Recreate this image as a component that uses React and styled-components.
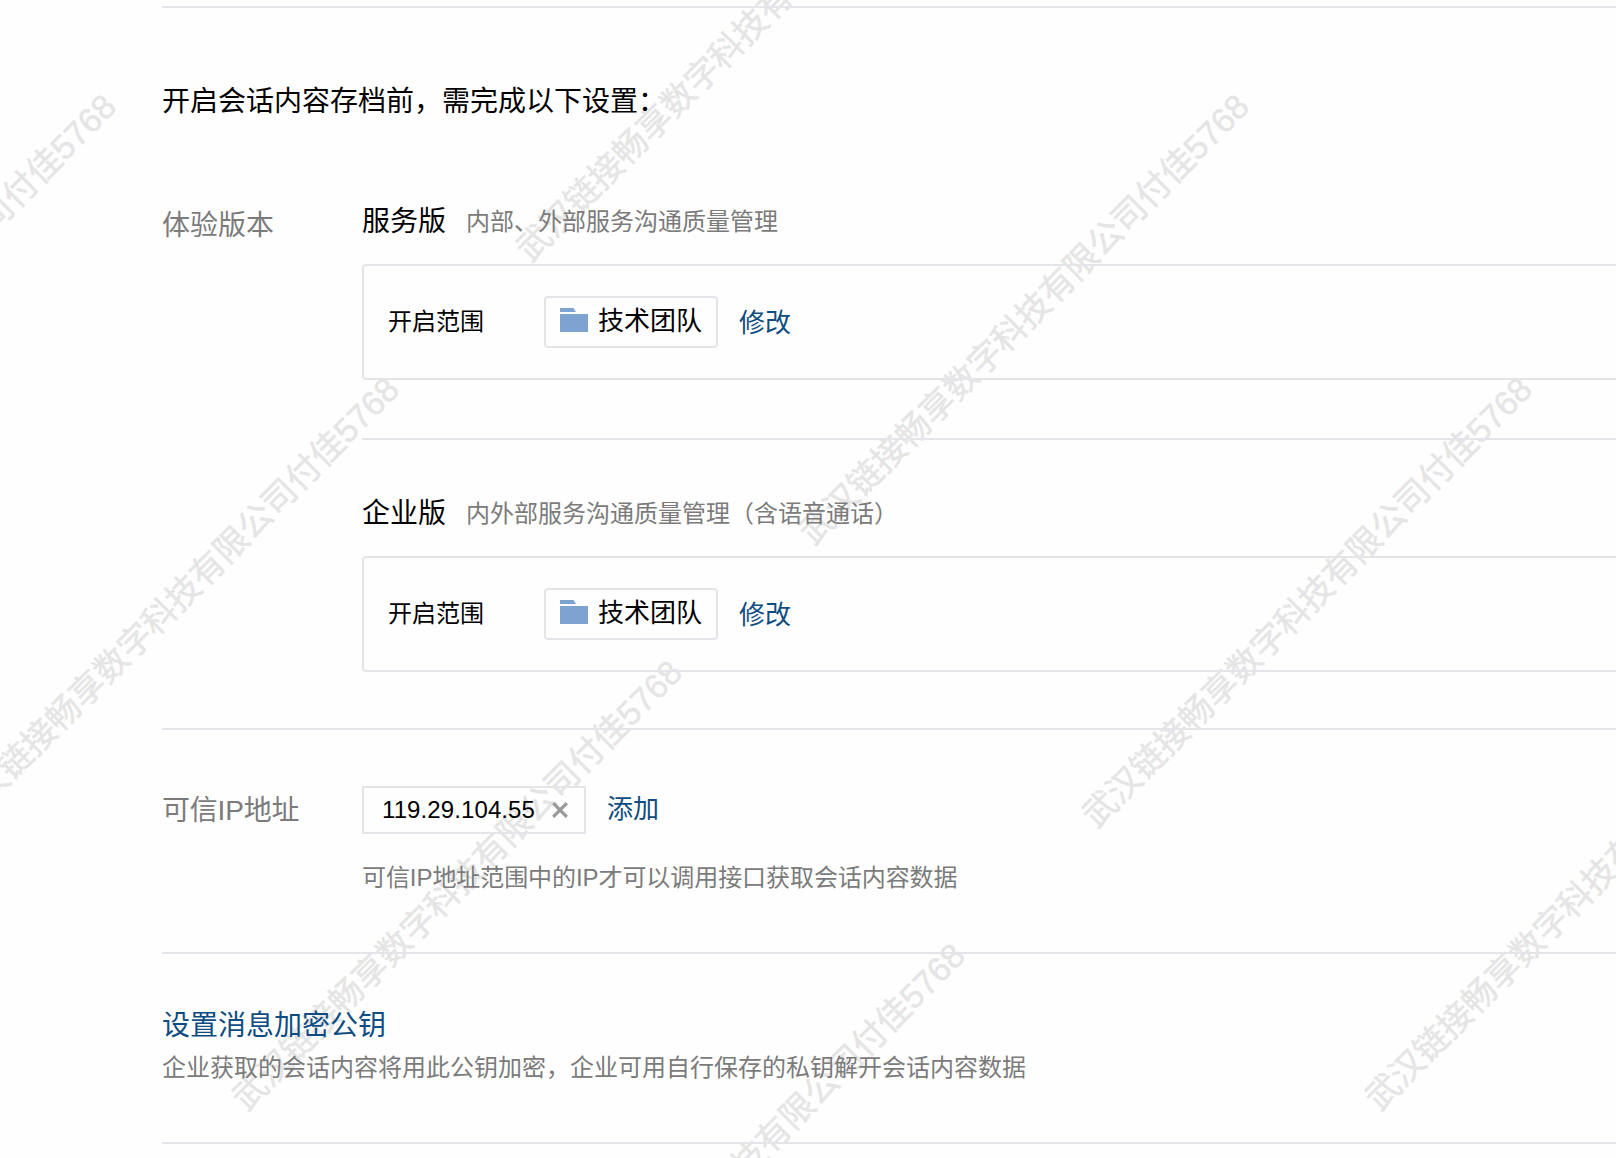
import React from 'react'
import styled, { createGlobalStyle } from 'styled-components'

const GlobalStyle = createGlobalStyle`
  body {
    margin: 0;
    background: #fefefe;
    font-family: 'Liberation Sans', 'Noto Sans CJK SC', sans-serif;
  }
`

const Page = styled.div`
  position: relative;
  z-index: 0;
  box-sizing: border-box;
  height: 1158px;
  padding: 6px 0 0 162px;
  overflow: hidden;
  color: #000000;
  white-space: nowrap;
`

const WatermarkLayer = styled.div`
  position: absolute;
  inset: 0;
  z-index: -1;
  overflow: hidden;
  pointer-events: none;
`

const Watermark = styled.span`
  position: absolute;
  left: ${(props) => props.$x}px;
  top: ${(props) => props.$y}px;
  color: #e5e5e5;
  font-size: 34px;
  line-height: 40px;
  letter-spacing: -0.05px;
  -webkit-text-stroke: 0.4px #e5e5e5;
  transform: translate(-50%, -50%) rotate(-45deg);
`

const Section = styled.section`
  box-sizing: border-box;
  height: ${(props) => props.$height}px;
  padding-top: ${(props) => props.$top}px;
  border-top: 2px solid #e4e4e9;
`

const Title = styled.h1`
  margin: 0;
  font-size: 28px;
  font-weight: 400;
  line-height: 40px;
`

const Row = styled.div`
  display: flex;
  align-items: flex-start;
  margin-top: ${(props) => props.$gap || 0}px;
`

const Label = styled.div`
  flex: 0 0 200px;
  padding-top: ${(props) => props.$drop || 0}px;
  color: #7b7b7b;
  font-size: 28px;
  line-height: 40px;
  letter-spacing: ${(props) => props.$tracking || 0}px;
`

const Field = styled.div`
  flex: 1;
`

const Edition = styled.div`
  & + & {
    margin-top: 58px;
    padding-top: 54px;
    border-top: 2px solid #e4e4e9;
  }
`

const EditionHead = styled.div`
  display: flex;
  align-items: center;
  gap: 20px;
  height: 40px;
  line-height: 40px;
`

const EditionName = styled.span`
  font-size: 28px;
`

const Hint = styled.div`
  color: #7b7b7b;
  font-size: 24px;
  line-height: 36px;
  margin-top: ${(props) => props.$gap || 0}px;
  letter-spacing: ${(props) => props.$tracking || 0}px;
`

const ScopeBox = styled.div`
  display: flex;
  align-items: center;
  box-sizing: border-box;
  height: 116px;
  margin: 22px -10px 0 0;
  padding-left: 24px;
  border: 2px solid #e4e4e9;
  border-radius: 4px;
`

const ScopeLabel = styled.div`
  width: 156px;
  font-size: 24px;
  line-height: 40px;
`

const Tag = styled.div`
  display: flex;
  align-items: center;
  box-sizing: border-box;
  height: 52px;
  padding: 0 14px 4px;
  border: 2px solid #e4e4e9;
  border-radius: 4px;
`

const TagName = styled.span`
  padding-top: 2px;
  font-size: 26px;
  line-height: 40px;
`

const FolderIcon = styled.svg`
  width: 28px;
  height: 24px;
  margin-right: 10px;
`

const Link = styled.a`
  color: #0f4c81;
  font-size: ${(props) => props.$size || 26}px;
  line-height: 40px;
  cursor: pointer;
`

const IpRow = styled.div`
  display: flex;
  align-items: center;
  gap: 21px;
`

const IpTag = styled.div`
  display: flex;
  align-items: center;
  justify-content: space-between;
  box-sizing: border-box;
  width: 224px;
  height: 48px;
  padding: 0 16px 0 18px;
  border: 2px solid #e4e4e9;
  font-size: 24px;
  letter-spacing: 0.1px;
`

const CloseIcon = styled.svg`
  width: 16px;
  height: 16px;
`

const ScopeLink = styled(Link)`
  margin-left: 21px;
  padding-top: 2px;
`

const AddLink = styled(Link)`
  padding-bottom: 2px;
`

const watermarks = [
  [741, 36],
  [-109, 319],
  [1024, 319],
  [174, 602],
  [1307, 602],
  [457, 885],
  [1590, 885],
  [740, 1168],
]

const Scope = () => (
  <ScopeBox>
    <ScopeLabel>开启范围</ScopeLabel>
    <Tag>
      <FolderIcon viewBox="0 0 28 24" fill="#7da3d1">
        <path d="M0 0h13.5l2.5 4H0zM0 6h28v18H0z" />
      </FolderIcon>
      <TagName>技术团队</TagName>
    </Tag>
    <ScopeLink>修改</ScopeLink>
  </ScopeBox>
)

const App = () => (
  <>
    <GlobalStyle />
    <Page>
      <WatermarkLayer>
        {watermarks.map(([x, y]) => (
          <Watermark key={`${x},${y}`} $x={x} $y={y}>
            武汉链接畅享数字科技有限公司付佳5768
          </Watermark>
        ))}
      </WatermarkLayer>

      <Section $height={722} $top={74}>
        <Title>开启会话内容存档前，需完成以下设置：</Title>
        <Row $gap={80}>
          <Label $drop={4}>体验版本</Label>
          <Field>
            <Edition>
              <EditionHead>
                <EditionName>服务版</EditionName>
                <Hint as="span">内部、外部服务沟通质量管理</Hint>
              </EditionHead>
              <Scope />
            </Edition>
            <Edition>
              <EditionHead>
                <EditionName>企业版</EditionName>
                <Hint as="span">内外部服务沟通质量管理（含语音通话）</Hint>
              </EditionHead>
              <Scope />
            </Edition>
          </Field>
        </Row>
      </Section>

      <Section $height={224} $top={56}>
        <Row>
          <Label $drop={5} $tracking={-0.2}>
            可信IP地址
          </Label>
          <Field>
            <IpRow>
              <IpTag>
                119.29.104.55
                <CloseIcon
                  viewBox="0 0 16 16"
                  fill="none"
                  stroke="#999999"
                  strokeWidth="3.2"
                >
                  <path d="M1.2 1.2l13.6 13.6M14.8 1.2L1.2 14.8" />
                </CloseIcon>
              </IpTag>
              <AddLink>添加</AddLink>
            </IpRow>
            <Hint $gap={26} $tracking={-0.07}>
              可信IP地址范围中的IP才可以调用接口获取会话内容数据
            </Hint>
          </Field>
        </Row>
      </Section>

      <Section $height={190} $top={52}>
        <Link $size={28}>设置消息加密公钥</Link>
        <Hint $gap={4}>
          企业获取的会话内容将用此公钥加密，企业可用自行保存的私钥解开会话内容数据
        </Hint>
      </Section>

      <Section $height={16} $top={0} />
    </Page>
  </>
)

export default App
